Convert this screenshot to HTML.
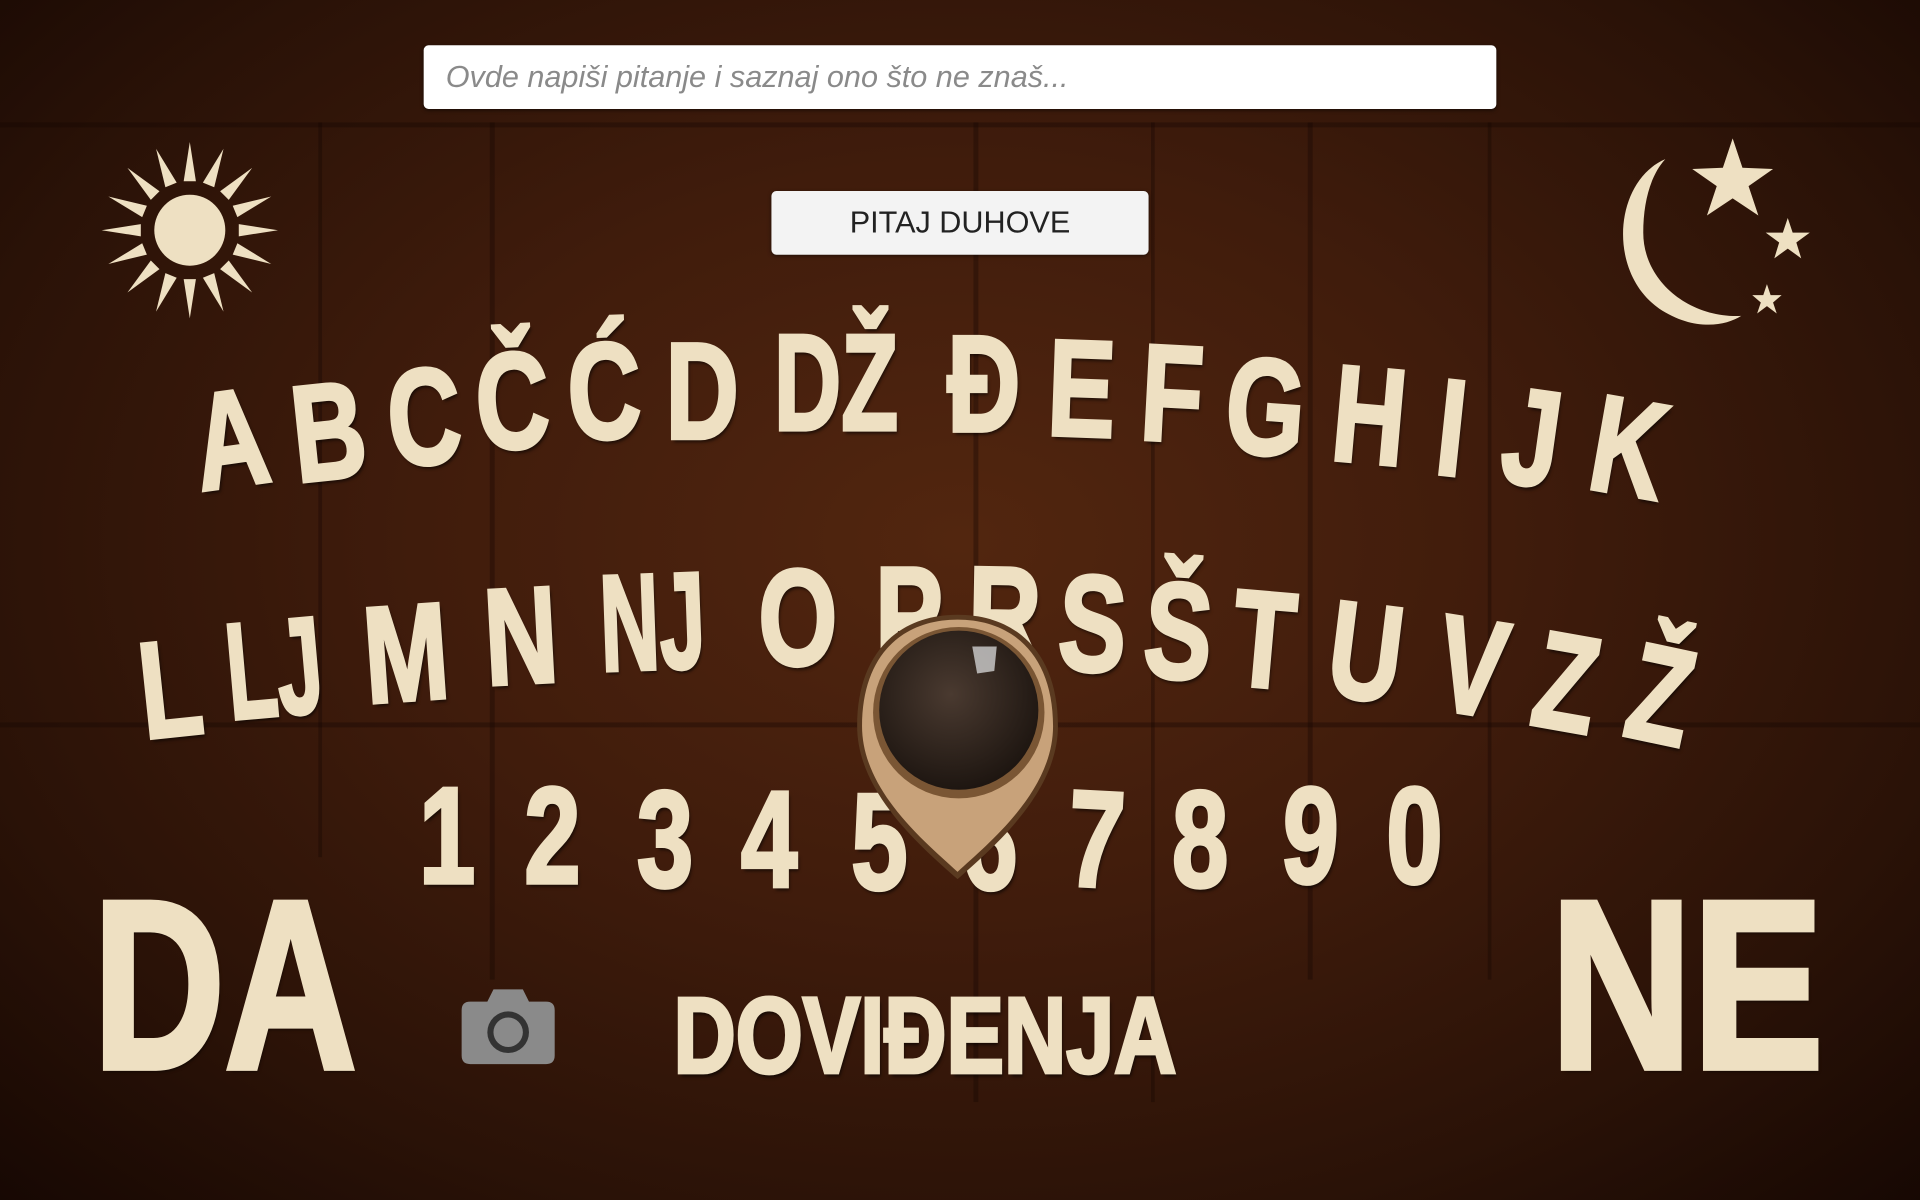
<!DOCTYPE html>
<html><head><meta charset="utf-8">
<style>
html,body{margin:0;padding:0;width:1920px;height:1200px;overflow:hidden;background:#2a1409;}
#w{position:absolute;left:0;top:0;width:1568px;height:980px;transform:scale(1.22449);transform-origin:0 0;
background:radial-gradient(ellipse at 50% 45%,#52260f 0%,#401c0c 40%,#2a1207 75%,#170803 100%);overflow:hidden;}
.ln{position:absolute;background:rgba(20,6,2,0.35);}
.l{position:absolute;font-family:"Liberation Sans",sans-serif;font-weight:bold;color:#eee0c2;-webkit-text-stroke:3px #eee0c2;
text-shadow:2px 3px 3px rgba(0,0,0,0.6);line-height:1;white-space:nowrap;}
.r1{font-size:112px;}
.inp{position:absolute;left:346px;top:37px;width:876px;height:52px;background:#fff;border-radius:4px;box-shadow:0 1px 3px rgba(0,0,0,.5);
font-family:"Liberation Sans",sans-serif;font-style:italic;font-size:25px;color:#8a8a8a;line-height:52px;box-sizing:border-box;padding-left:18px;}
.btn{position:absolute;left:630px;top:156px;width:308px;height:52px;background:#f3f3f3;border-radius:4px;box-shadow:0 1px 3px rgba(0,0,0,.5);
font-family:"Liberation Sans",sans-serif;font-size:25px;color:#222;line-height:52px;text-align:center;}
</style></head><body><div id="w">
<div class="ln" style="left:0;top:100px;width:1568px;height:4px"></div>
<div class="ln" style="left:0;top:590px;width:1568px;height:4px"></div>
<div class="ln" style="left:400px;top:100px;width:4px;height:700px"></div>
<div class="ln" style="left:795px;top:100px;width:4px;height:800px"></div>
<div class="ln" style="left:940px;top:100px;width:3px;height:800px"></div>
<div class="ln" style="left:1068px;top:100px;width:4px;height:700px"></div>
<div class="ln" style="left:1215px;top:100px;width:3px;height:700px"></div>
<div class="ln" style="left:260px;top:100px;width:3px;height:600px"></div>

<div class="inp">Ovde napiši pitanje i saznaj ono što ne znaš...</div>
<div class="btn">PITAJ DUHOVE</div>

<svg style="position:absolute;left:75px;top:110px" width="160" height="155" viewBox="-80 -78 160 155">
<g fill="#eee0c2">
<circle r="29"/>
<g id="ray"><path d="M-5,-40 L0,-72 L5,-40 Z"/></g>
<use href="#ray" transform="rotate(22.5)"/><use href="#ray" transform="rotate(45)"/><use href="#ray" transform="rotate(67.5)"/>
<use href="#ray" transform="rotate(90)"/><use href="#ray" transform="rotate(112.5)"/><use href="#ray" transform="rotate(135)"/>
<use href="#ray" transform="rotate(157.5)"/><use href="#ray" transform="rotate(180)"/><use href="#ray" transform="rotate(202.5)"/>
<use href="#ray" transform="rotate(225)"/><use href="#ray" transform="rotate(247.5)"/><use href="#ray" transform="rotate(270)"/>
<use href="#ray" transform="rotate(292.5)"/><use href="#ray" transform="rotate(315)"/><use href="#ray" transform="rotate(337.5)"/>
</g></svg>
<svg style="position:absolute;left:1310px;top:110px" width="175" height="160" viewBox="0 0 175 160">
<g fill="#eee0c2">
<path d="M50,20 C8,38 2,112 45,142 C72,160 98,157 112,148 C70,150 32,120 32,80 C32,55 38,33 50,20 Z"/>
<path d="M105,3 L113,27 L138,28 L118,42 L126,66 L105,52 L84,66 L92,42 L72,28 L97,27 Z"/>
<path d="M150,68 L154,80 L168,80 L157,88 L161,101 L150,93 L139,101 L143,88 L132,80 L146,80 Z"/>
<path d="M133,122 L136,131 L145,131 L138,137 L141,146 L133,140 L125,146 L128,137 L121,131 L130,131 Z"/>
</g></svg>

<div class="l r1" style="left:148px;top:303px;transform:rotate(-8deg) scaleX(.74)">A</div>
<div class="l r1" style="left:228px;top:297px;transform:rotate(-6deg) scaleX(.74)">B</div>
<div class="l r1" style="left:306px;top:285px;transform:rotate(-4deg) scaleX(.74)">C</div>
<div class="l r1" style="left:378px;top:272px;transform:rotate(-3deg) scaleX(.74)">Č</div>
<div class="l r1" style="left:453px;top:264px;transform:rotate(-2deg) scaleX(.74)">Ć</div>
<div class="l r1" style="left:533px;top:264px;transform:scaleX(.74)">D</div>
<div class="l r1" style="left:632px;top:257px;transform:scaleX(.68);transform-origin:0 0">DŽ</div>
<div class="l r1" style="left:763px;top:258px;transform:scaleX(.74)">Đ</div>
<div class="l r1" style="left:846px;top:262px;transform:rotate(2deg) scaleX(.74)">E</div>
<div class="l r1" style="left:923px;top:266px;transform:rotate(3deg) scaleX(.74)">F</div>
<div class="l r1" style="left:990px;top:277px;transform:rotate(4deg) scaleX(.74)">G</div>
<div class="l r1" style="left:1078px;top:284px;transform:rotate(5deg) scaleX(.74)">H</div>
<div class="l r1" style="left:1170px;top:294px;transform:rotate(6deg) scaleX(.74)">I</div>
<div class="l r1" style="left:1220px;top:302px;transform:rotate(8deg) scaleX(.74)">J</div>
<div class="l r1" style="left:1290px;top:310px;transform:rotate(10deg) scaleX(.74)">K</div>

<div class="l r1" style="left:105px;top:507px;transform:rotate(-6deg) scaleX(.74)">L</div>
<div class="l r1" style="left:180px;top:494px;transform:rotate(-5deg) scaleX(.6);transform-origin:0 0">LJ</div>
<div class="l r1" style="left:285px;top:478px;transform:rotate(-4deg) scaleX(.74)">M</div>
<div class="l r1" style="left:385px;top:464px;transform:rotate(-3deg) scaleX(.74)">N</div>
<div class="l r1" style="left:488px;top:454px;transform:rotate(-2deg) scaleX(.6);transform-origin:0 0">NJ</div>
<div class="l r1" style="left:608px;top:449px;transform:scaleX(.74)">O</div>
<div class="l r1" style="left:705px;top:447px;transform:scaleX(.74)">P</div>
<div class="l r1" style="left:780px;top:447px;transform:rotate(1deg) scaleX(.74)">R</div>
<div class="l r1" style="left:855px;top:454px;transform:rotate(3deg) scaleX(.74)">S</div>
<div class="l r1" style="left:925px;top:460px;transform:rotate(4deg) scaleX(.74)">Š</div>
<div class="l r1" style="left:998px;top:467px;transform:rotate(5deg) scaleX(.74)">T</div>
<div class="l r1" style="left:1075px;top:477px;transform:rotate(7deg) scaleX(.74)">U</div>
<div class="l r1" style="left:1165px;top:489px;transform:rotate(9deg) scaleX(.74)">V</div>
<div class="l r1" style="left:1245px;top:502px;transform:rotate(10deg) scaleX(.74)">Z</div>
<div class="l r1" style="left:1322px;top:512px;transform:rotate(12deg) scaleX(.74)">Ž</div>

<div class="l r1" style="left:334px;top:627px;transform:scaleX(.74)">1</div>
<div class="l r1" style="left:420px;top:627px;transform:scaleX(.74)">2</div>
<div class="l r1" style="left:512px;top:630px;transform:scaleX(.74)">3</div>
<div class="l r1" style="left:597px;top:630px;transform:scaleX(.74)">4</div>
<div class="l r1" style="left:687px;top:632px;transform:scaleX(.74)">5</div>
<div class="l r1" style="left:777px;top:632px;transform:scaleX(.74)">6</div>
<div class="l r1" style="left:864px;top:630px;transform:rotate(3deg) scaleX(.74)">7</div>
<div class="l r1" style="left:949px;top:630px;transform:scaleX(.74)">8</div>
<div class="l r1" style="left:1039px;top:627px;transform:rotate(3deg) scaleX(.74)">9</div>
<div class="l r1" style="left:1124px;top:627px;transform:scaleX(.74)">0</div>

<div class="l" style="left:76px;top:707px;font-size:196px;-webkit-text-stroke:5px #eee0c2;transform:scaleX(.76);transform-origin:0 0">DA</div>
<div class="l" style="left:1266px;top:707px;font-size:196px;-webkit-text-stroke:5px #eee0c2;transform:scaleX(.82);transform-origin:0 0">NE</div>
<div class="l" style="left:550px;top:802px;font-size:88px;transform:scaleX(.8);transform-origin:0 0">DOVIĐENJA</div>

<svg style="position:absolute;left:376px;top:806px" width="78" height="64" viewBox="0 0 78 64">
<path fill="#8a8a8a" d="M8,12 H22 L27,2 H51 L56,12 H70 Q77,12 77,19 V56 Q77,63 70,63 H8 Q1,63 1,56 V19 Q1,12 8,12 Z"/>
<circle cx="39" cy="37" r="17" fill="#333"/><circle cx="39" cy="37" r="12" fill="#8a8a8a"/>
</svg>
<svg style="position:absolute;left:694px;top:498px" width="176" height="225" viewBox="0 0 176 225">
<defs><radialGradient id="g" cx="45%" cy="40%" r="60%"><stop offset="0" stop-color="#4a3a30"/><stop offset="1" stop-color="#1e1611"/></radialGradient></defs>
<path d="M88,4 C40,4 6,35 6,95 C6,150 60,195 88,220 C116,195 170,150 170,95 C170,35 136,4 88,4 Z" fill="#5a3a20"/>
<path d="M88,8 C42,8 10,38 10,95 C10,148 62,190 88,214 C114,190 166,148 166,95 C166,38 134,8 88,8 Z" fill="#c8a27a"/>
<circle cx="89" cy="84" r="70" fill="#7a5634"/>
<circle cx="89" cy="82" r="65" fill="url(#g)"/>
<path d="M100,30 L120,30 L118,50 L104,52 Z" fill="#cfcfcf" opacity=".8"/>
</svg>
</div></body></html>
